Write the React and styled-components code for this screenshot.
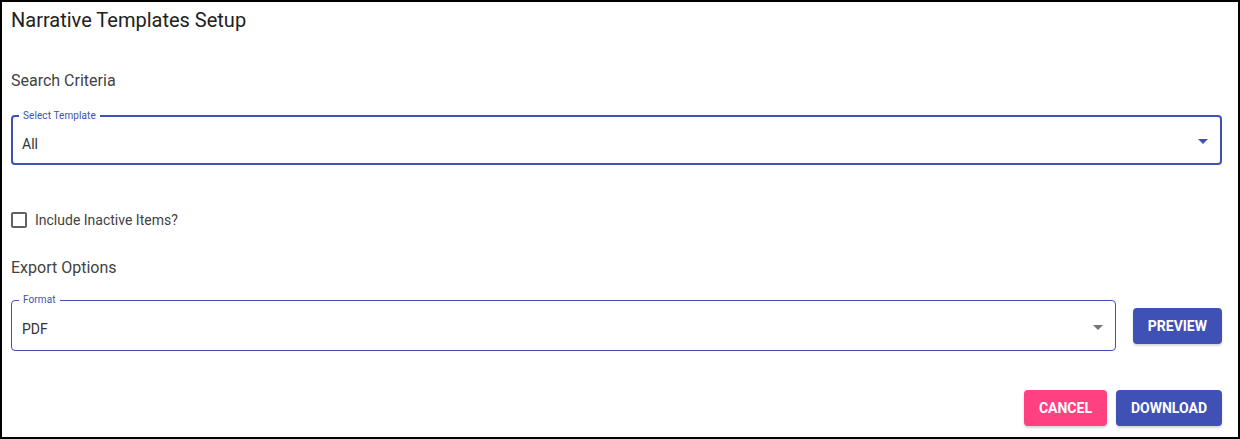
import React from "react"
import styled, { createGlobalStyle } from "styled-components"

const GlobalStyle = createGlobalStyle`
  html, body {
    margin: 0;
    padding: 0;
    background: #fff;
    font-family: Roboto, "Liberation Sans", sans-serif;
  }
  * { box-sizing: border-box; }
`

const Frame = styled.div`
  width: 1240px;
  height: 439px;
  border: 2px solid #000;
  padding: 0 16px 0 9px;
  display: flex;
  flex-direction: column;
`

const Title = styled.h1`
  margin: 6px 0 0;
  font-size: 20px;
  font-weight: 400;
  line-height: 24px;
  color: #212121;
`

const Section = styled.h2`
  margin: ${p => p.$top}px 0 0;
  font-size: 16px;
  font-weight: 400;
  line-height: 20px;
  color: #424242;
`

const Row = styled.div`
  display: flex;
  align-items: center;
  gap: 17px;
  margin-top: ${p => p.$top || 0}px;
`

const Field = styled.fieldset`
  flex: 1;
  margin: 0;
  height: ${p => p.$focused ? 54 : 56}px;
  padding: 3px 10px 0 ${p => p.$focused ? 9 : 10}px;
  border: ${p => p.$focused ? 2 : 1}px solid #3f51b5;
  border-radius: 4px;
  display: flex;
  align-items: center;
  min-width: 0;
`

const Legend = styled.legend`
  padding: 0 4px;
  margin-left: -3px;
  font-size: 10px;
  line-height: 10px;
  color: #3f51b5;
  letter-spacing: 0.1px;
`

const Value = styled.div`
  flex: 1;
  font-size: 14px;
  color: #333;
`

const Caret = styled.svg`
  width: 24px;
  height: 24px;
  margin-top: -5px;
  margin-right: -5px;
  fill: ${p => p.$color};
`

const CheckRow = styled.label`
  display: flex;
  align-items: center;
  gap: 8px;
  height: 16px;
  margin-top: 47px;
  font-size: 14px;
  color: #424242;
`

const Box = styled.span`
  width: 16px;
  height: 16px;
  border: 2px solid #616161;
  border-radius: 2px;
`

const Button = styled.button`
  height: 36px;
  padding: 0 15px;
  border: none;
  border-radius: 4px;
  background: ${p => p.$bg};
  color: #fff;
  font-family: Roboto, "Liberation Sans", sans-serif;
  font-size: 14px;
  font-weight: 700;
  text-transform: uppercase;
  box-shadow: 0 2px 2px rgba(0,0,0,0.15);
`

const SideButton = styled(Button)`
  align-self: flex-end;
  margin-bottom: 7px;
`

const Actions = styled.div`
  display: flex;
  justify-content: flex-end;
  gap: 9px;
  margin-top: 39px;
`

const Arrow = ({ color }) => (
  <Caret viewBox="0 0 24 24" $color={color}>
    <path d="M7 10l5 5 5-5z" />
  </Caret>
)

export default function App() {
  return (
    <>
      <GlobalStyle />
      <Frame>
        <Title>Narrative Templates Setup</Title>
        <Section $top={39}>Search Criteria</Section>
        <Row $top={20}>
          <Field $focused>
            <Legend>Select Template</Legend>
            <Value>All</Value>
            <Arrow color="#3f51b5" />
          </Field>
        </Row>
        <CheckRow>
          <Box />
          Include Inactive Items?
        </CheckRow>
        <Section $top={30}>Export Options</Section>
        <Row $top={17}>
          <Field>
            <Legend>Format</Legend>
            <Value>PDF</Value>
            <Arrow color="#757575" />
          </Field>
          <SideButton $bg="#3f51b5">Preview</SideButton>
        </Row>
        <Actions>
          <Button $bg="#ff4081">Cancel</Button>
          <Button $bg="#3f51b5">Download</Button>
        </Actions>
      </Frame>
    </>
  )
}
